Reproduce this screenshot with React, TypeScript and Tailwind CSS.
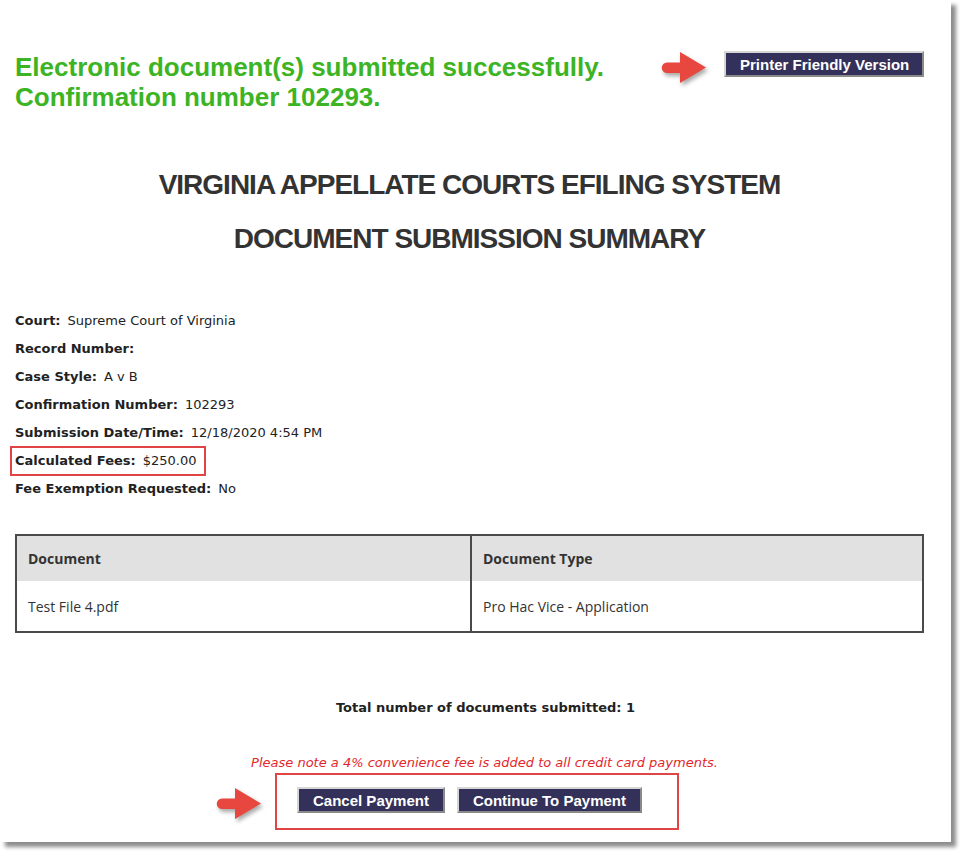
import React from "react";

const verdana = { fontFamily: '"DejaVu Sans", Verdana, sans-serif' };

const Arrow = () => (
  <svg
    width="48"
    height="34"
    viewBox="0 0 48 34"
    className="drop-shadow-[2px_3px_2px_rgba(0,0,0,0.35)]"
  >
    <path
      d="M6 11.5 H19 V1 L45 16.5 L19 32 V22 H6 A5.25 5.25 0 0 1 6 11.5 Z"
      fill="#e8473f"
    />
  </svg>
);

const Button = ({ children, className = "" }: { children: React.ReactNode; className?: string }) => (
  <button
    className={`h-[26px] px-[14px] bg-[#33315a] text-white font-bold text-[15px] leading-none whitespace-nowrap border-2 border-t-[#d6d6d6] border-l-[#d6d6d6] border-b-[#8a8a8a] border-r-[#8a8a8a] font-['Liberation_Sans',Arial,sans-serif] ${className}`}
  >
    {children}
  </button>
);

const Row = ({ label, value }: { label: string; value?: string }) => (
  <div className="h-[28px] flex items-center text-[13px] text-[#222]">
    <span className="font-bold">{label}</span>
    {value && <span className="ml-[7px]">{value}</span>}
  </div>
);

const App = () => {
  return (
    <div className="w-[967px] h-[856px] bg-white overflow-hidden">
      <div className="w-[951px] h-[842px] bg-white shadow-[5px_5px_4px_rgba(0,0,0,0.45)] pl-[15px] pr-[27px] pt-[52px]">
        <header className="flex justify-between items-start">
          <h1 className="text-[26px] leading-[30px] font-bold text-[#3cb424] font-['Liberation_Sans',Arial,sans-serif]">
            Electronic document(s) submitted successfully.
            <br />
            Confirmation number 102293.
          </h1>
          <div className="flex items-start gap-[15px] -mt-[1px]">
            <Arrow />
            <Button className="w-[200px] px-0">Printer Friendly Version</Button>
          </div>
        </header>

        <section className="mt-[55px] text-center text-[#333] font-bold text-[28px] tracking-[-1px] leading-[36px] font-['Liberation_Sans',Arial,sans-serif]">
          <h2>VIRGINIA APPELLATE COURTS EFILING SYSTEM</h2>
          <h2 className="mt-[18px]">DOCUMENT SUBMISSION SUMMARY</h2>
        </section>

        <section className="mt-[50px]" style={verdana}>
          <Row label="Court:" value="Supreme Court of Virginia" />
          <Row label="Record Number:" />
          <Row label="Case Style:" value="A v B" />
          <Row label="Confirmation Number:" value="102293" />
          <Row label="Submission Date/Time:" value="12/18/2020 4:54 PM" />
          <div className="relative w-fit">
            <Row label="Calculated Fees:" value="$250.00" />
            <div className="absolute -left-[5px] -right-[9px] -top-[1px] -bottom-[1px] border-2 border-[#e04444]" />
          </div>
          <Row label="Fee Exemption Requested:" value="No" />
        </section>

        <table className="mt-[31px] w-full border-collapse border-2 border-[#4a4a4a] text-[14px] text-[#333] font-['Open_Sans',sans-serif]">
          <thead>
            <tr className="bg-[#e1e1e1] h-[46px]">
              <th className="text-left font-bold px-[11px] w-[455px] border-r-2 border-[#4a4a4a]">
                Document
              </th>
              <th className="text-left font-bold px-[11px]">Document Type</th>
            </tr>
          </thead>
          <tbody>
            <tr className="h-[51px]">
              <td className="px-[11px] border-r-2 border-[#4a4a4a]">Test File 4.pdf</td>
              <td className="px-[11px]">Pro Hac Vice - Application</td>
            </tr>
          </tbody>
        </table>

        <p
          className="mt-[65px] pl-[32px] text-center font-bold text-[13px] leading-[20px] text-[#222]"
          style={verdana}
        >
          Total number of documents submitted: 1
        </p>

        <p
          className="mt-[35px] pl-[30px] text-center italic text-[13px] leading-[20px] text-[#e3262b]"
          style={verdana}
        >
          Please note a 4% convenience fee is added to all credit card payments.
        </p>

        <div className="mt-[14px] flex justify-center">
          <div className="relative flex gap-[12px]">
            <div className="absolute -left-[81px] top-0">
              <Arrow />
            </div>
            <Button>Cancel Payment</Button>
            <Button>Continue To Payment</Button>
            <div className="absolute -left-[22px] -right-[37px] -top-[14px] -bottom-[17px] border-2 border-[#e04444]" />
          </div>
        </div>
      </div>
    </div>
  );
};

export default App;
